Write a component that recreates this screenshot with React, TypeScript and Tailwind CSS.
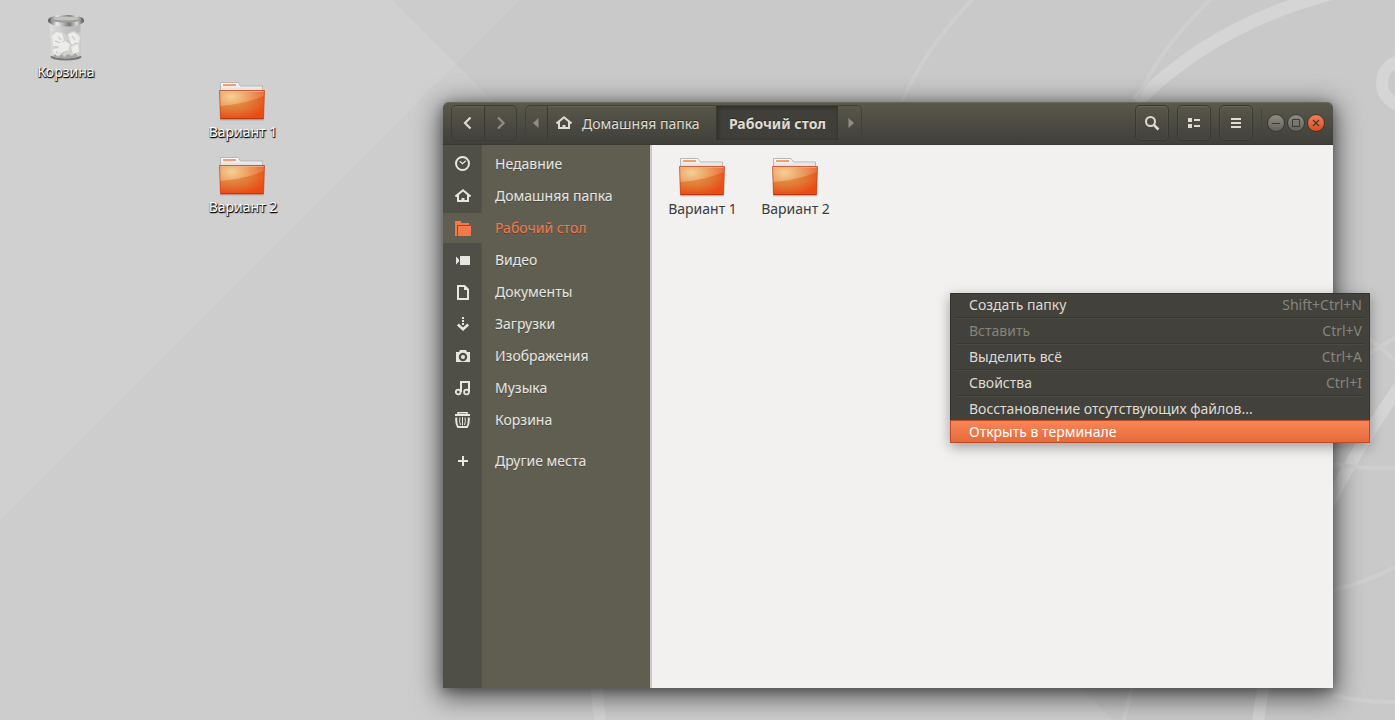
import React from "react";

type Icon = () => React.ReactElement;

function FolderArt() {
  return (
    <svg width="48" height="40" viewBox="1 1 48 40" aria-hidden="true">
      <defs>
        <radialGradient id="folderFace" cx="0.27" cy="0.22" r="0.95">
          <stop offset="0" stopColor="#f6cf96" />
          <stop offset="0.35" stopColor="#eda568" />
          <stop offset="0.75" stopColor="#ea7040" />
          <stop offset="1" stopColor="#e04a18" />
        </radialGradient>
        <radialGradient id="folderLow" cx="0.3" cy="0.2" r="0.8">
          <stop offset="0" stopColor="#e09a48" />
          <stop offset="0.55" stopColor="#e27632" />
          <stop offset="1" stopColor="#ea4c15" />
        </radialGradient>
        <linearGradient id="folderPaper" x1="0" y1="0" x2="0" y2="1">
          <stop offset="0" stopColor="#ffffff" />
          <stop offset="1" stopColor="#dedcda" />
        </linearGradient>
      </defs>
      <path d="M2.500 10V1.500h17.500l2.500 3.500H44.500v5z" fill="url(#folderPaper)" stroke="#b9b7b5" strokeWidth="1" />
      <rect x="5" y="3" width="13" height="2" fill="#f0a070" />
      <path d="M2 38.500h44v1H2z" fill="#000" opacity="0.15" />
      <path d="M1.500 9.500h45l-1 28.500h-43z" fill="url(#folderFace)" />
      <path d="M2 25C18 24 34 20 46 15L45.500 38h-43z" fill="url(#folderLow)" />
      <path d="M1.500 9.500h45l-1 28.500h-43z" fill="none" stroke="#c6431a" strokeOpacity="0.75" />
      <path d="M2.500 10.500h43" stroke="#f5b48a" strokeOpacity="0.7" />
      <path d="M3 37.500h42" stroke="#a8330c" strokeOpacity="0.7" />
    </svg>
  );
}

function TrashArt() {
  return (
    <svg width="48" height="50" viewBox="0 0 48 50" aria-hidden="true">
      <defs>
        <linearGradient id="trashRim" x1="0" x2="1">
          <stop offset="0" stopColor="#555" />
          <stop offset="0.25" stopColor="#eee" />
          <stop offset="0.6" stopColor="#777" />
          <stop offset="0.8" stopColor="#ddd" />
          <stop offset="1" stopColor="#555" />
        </linearGradient>
        <linearGradient id="trashGlass" x1="0" x2="1">
          <stop offset="0" stopColor="#dedede" />
          <stop offset="0.5" stopColor="#c4c4c4" />
          <stop offset="0.9" stopColor="#b8b8b8" />
          <stop offset="1" stopColor="#dcdcdc" />
        </linearGradient>
      </defs>
      <ellipse cx="24" cy="45" rx="15.500" ry="3.500" fill="#777" />
      <path d="M7.500 9l2 35q14.500 5 29 0l2-35z" fill="url(#trashGlass)" />
      <path d="M10 21l3-2 4 1 5 1 2 3 4-4 5-1 3 2 3-1-1.500 24q-13 4-26 0z" fill="#d0d1cd" />
      <path d="M10 24l4-4 6 1 2 7-5 6-6 0zM26 22l6-2 6 5-2 8-7-1zM16 33l7-4 5 3-2 8-8 1zM29 35l7-3 1 8-6 2zM11 37l6-1 1 7-6 1z" fill="#ececea" />
      <path d="M13 29l5 2M25 28l3 4M32 32l4-1M20 41l6-2M16 24l3 4M30 24l3 4M14 39l2 3" fill="none" stroke="#c0c2bc" />
      <path d="M11 44l2-2 3 3 4-3 2 3 4-3 4 2 3-3 3 3-4 2H14z" fill="#a6a9a2" />
      <ellipse cx="24" cy="9" rx="18" ry="5.500" fill="url(#trashRim)" />
      <ellipse cx="24" cy="7.500" rx="17.500" ry="4.500" fill="url(#trashRim)" />
      <ellipse cx="24" cy="7.500" rx="15" ry="3.200" fill="#9d9f9b" />
      <ellipse cx="24" cy="6.500" rx="13" ry="1.800" fill="#c1c4bf" />
    </svg>
  );
}

const glyph = "block size-4 shrink-0";

const ClockIcon: Icon = () => (
  <svg className={glyph} viewBox="0 0 16 16" fill="none" stroke="currentColor" aria-hidden="true">
    <circle cx="7.500" cy="7.500" r="6.500" strokeWidth="2" />
    <path d="M4.800 5.300L7.500 7.800l3.300-3" strokeWidth="1.200" />
  </svg>
);
const HomeIcon: Icon = () => (
  <svg className={glyph} viewBox="0 0 16 16" fill="none" stroke="currentColor" strokeWidth="2" aria-hidden="true">
    <path d="M.5 8.500L8 2.200l7.500 6.300" />
    <path d="M3 7v6h10V7" />
    <path d="M8 14v-4" strokeWidth="3" />
  </svg>
);
const FoldersIcon: Icon = () => (
  <svg className={glyph} viewBox="0 0 16 16" fill="currentColor" aria-hidden="true">
    <path d="M0 1h6v2h8v2H2v11H0z" />
    <path d="M3 6h13v10H3z" />
  </svg>
);
const VideoIcon: Icon = () => (
  <svg className={glyph} viewBox="0 0 16 16" fill="currentColor" aria-hidden="true">
    <path d="M1 4.500l3 3v2l-3 3zM5.500 4h9l.5.500v8l-.5.500h-9L5 12.500v-8z" />
  </svg>
);
const DocumentIcon: Icon = () => (
  <svg className={glyph} viewBox="0 0 16 16" aria-hidden="true">
    <path d="M3 2h6.500L13 5.500V15H3z" fill="none" stroke="currentColor" strokeWidth="2" />
    <path d="M9 1v5h5z" fill="currentColor" />
  </svg>
);
const DownloadIcon: Icon = () => (
  <svg className={glyph} viewBox="0 0 16 16" aria-hidden="true">
    <path d="M7 1h2v2H7zM7 4h2v2H7zM7 7h2v2H7z" fill="currentColor" />
    <path d="M2.800 8.500L8 13.200l5.200-4.700" fill="none" stroke="currentColor" strokeWidth="2.500" />
  </svg>
);
const CameraIcon: Icon = () => (
  <svg className={glyph} viewBox="0 0 16 16" fill="currentColor" aria-hidden="true">
    <path fillRule="evenodd" d="M5 2h6l1 2h3v10H1V4h3zM8 4.800a4.200 4.200 0 1 0 0 8.400 4.200 4.200 0 0 0 0-8.400z" />
    <circle cx="8" cy="9" r="2" />
  </svg>
);
const MusicIcon: Icon = () => (
  <svg className={glyph} viewBox="0 0 16 16" fill="none" stroke="currentColor" aria-hidden="true">
    <circle cx="3.200" cy="12" r="2.400" strokeWidth="1.800" />
    <circle cx="11.500" cy="12" r="2.400" strokeWidth="1.800" />
    <path d="M6 12V2h8v10" strokeWidth="2" />
  </svg>
);
const BinIcon: Icon = () => (
  <svg className={glyph} viewBox="0 0 16 16" fill="none" stroke="currentColor" aria-hidden="true">
    <path d="M0 3h15" strokeWidth="2" />
    <path d="M3 2V.800h9V2" strokeWidth="1.500" />
    <path d="M1.300 5.500q-.6 6 1.700 9.500h9q2.300-3.500 1.700-9.500" strokeWidth="2" />
    <path d="M5 5.500q-1 4 .5 7.500M7.500 5V13.500M10 5.500q1 4-.5 7.500" strokeWidth="1" />
  </svg>
);
const PlusIcon: Icon = () => (
  <svg className={glyph} viewBox="0 0 16 16" fill="none" stroke="currentColor" strokeWidth="2" aria-hidden="true">
    <path d="M3 8h10M8 3v10" />
  </svg>
);

const places: { label: string; icon: Icon; active?: boolean }[] = [
  { label: "Недавние", icon: ClockIcon },
  { label: "Домашняя папка", icon: HomeIcon },
  { label: "Рабочий стол", icon: FoldersIcon, active: true },
  { label: "Видео", icon: VideoIcon },
  { label: "Документы", icon: DocumentIcon },
  { label: "Загрузки", icon: DownloadIcon },
  { label: "Изображения", icon: CameraIcon },
  { label: "Музыка", icon: MusicIcon },
  { label: "Корзина", icon: BinIcon },
];

function Place({ label, icon: Glyph, active }: { label: string; icon: Icon; active?: boolean }) {
  return (
    <li>
      <button
        className={
          active
            ? "flex h-8 w-full items-center text-left text-[#f4794a]"
            : "flex h-8 w-full items-center text-left text-[#e6e6e3]"
        }
      >
        <span
          className={
            active
              ? "flex h-[30px] w-[39px] items-center justify-center bg-[#605e50]"
              : "flex h-[30px] w-[39px] items-center justify-center"
          }
        >
          <Glyph />
        </span>
        <span className="pb-[2px] pl-[13px] [text-shadow:0_1px_rgba(0,0,0,0.25)]">{label}</span>
      </button>
    </li>
  );
}

function DesktopItem({ label, children }: { label: string; children: React.ReactNode }) {
  return (
    <button className="flex w-24 flex-col items-center text-white [text-shadow:1px_1px_1px_#000,0_1px_1px_#000]">
      {children}
      <span className="leading-5">{label}</span>
    </button>
  );
}

const toolButton =
  "flex h-9 w-[34px] items-center justify-center rounded-[5px] border border-[#393832] text-[#dfdbd2] shadow-[inset_0_1px_rgba(255,255,255,0.07),inset_0_0_0_1px_rgba(255,255,255,0.03)]";

const menu: { label: string; keys?: string; disabled?: boolean }[] = [
  { label: "Создать папку", keys: "Shift+Ctrl+N" },
  { label: "Вставить", keys: "Ctrl+V", disabled: true },
  { label: "Выделить всё", keys: "Ctrl+A" },
  { label: "Свойства", keys: "Ctrl+I" },
];

function Wallpaper() {
  return (
    <svg
      className="absolute inset-0 h-full w-full"
      viewBox="0 0 1395 720"
      preserveAspectRatio="xMidYMid slice"
      fill="none"
      aria-hidden="true"
    >
      <path d="M0 0h1395v720H0z" fill="#cdcdcd" />
      <path d="M0 0H393L456 64L0 520z" fill="#d0d0d0" />
      <path d="M393 0h127l-64 64z" fill="#cccccc" />
      <path d="M520 0L456 64L1113 720H1395V0z" fill="#c9c9c9" />
      <g stroke="#d5d5d5">
        <path d="M1137 102Q1213 25 1330-6" strokeWidth="13" />
        <circle cx="1405" cy="83" r="23" strokeWidth="12" />
        <path d="M596 660q0 30 4 60M1258 720Q1280 560 1400 385" strokeWidth="12" />
      </g>
      <g stroke="#cfcfcf" strokeWidth="4">
        <path d="M902 102Q925 48 974-2M1138 98Q1160 48 1212-2" />
        <path d="M1333 464q30 5 62 4M1333 590q32-7 62-23M1333 695q30 8 62 7M1365 335l30 25M1365 356l30-18M1136 670l-12 50" />
      </g>
    </svg>
  );
}

export default function App() {
  return (
    <main className="relative min-h-screen overflow-hidden bg-[#cdcdcd] font-['Noto_Sans','Open_Sans',sans-serif] text-[14px]">
      <Wallpaper />

      <div className="absolute left-[18px] top-3">
        <DesktopItem label="Корзина">
          <TrashArt />
        </DesktopItem>
      </div>
      <div className="absolute left-[195px] top-[82px] flex flex-col gap-[15px]">
        <DesktopItem label="Вариант 1">
          <FolderArt />
        </DesktopItem>
        <DesktopItem label="Вариант 2">
          <FolderArt />
        </DesktopItem>
      </div>

      <section className="absolute bottom-8 left-[443px] right-[62px] top-[102px] flex flex-col rounded-t-[6px] shadow-[0_2px_8px_1px_rgba(0,0,0,0.2),0_6px_27px_3px_rgba(0,0,0,0.62)]">
        <header className="flex h-[43px] shrink-0 items-center rounded-t-[6px] border-b border-[#3a3933] bg-linear-to-b from-[#5b594c] to-[#403f3a] px-2 shadow-[inset_0_1px_#696758]">
          <div className="flex h-9 w-[66px] rounded-[5px] border border-[#3d3c36] text-[#dfdbd2]">
            <button aria-label="Назад" className="flex flex-1 items-center justify-center rounded-l-[5px] border-r border-[#393832] shadow-[inset_0_1px_rgba(255,255,255,0.07)]">
              <svg className="size-4" viewBox="0 0 16 16" fill="none" stroke="currentColor" strokeWidth="2.200" aria-hidden="true">
                <path d="M10.500 2.500L5 8l5.500 5.500" />
              </svg>
            </button>
            <button aria-label="Вперёд" disabled className="flex flex-1 items-center justify-center text-[#908d84]">
              <svg className="size-4" viewBox="0 0 16 16" fill="none" stroke="currentColor" strokeWidth="2.200" aria-hidden="true">
                <path d="M6 2.500L11.500 8 6 13.500" />
              </svg>
            </button>
          </div>

          <nav aria-label="Путь" className="ml-2 flex h-9 overflow-hidden rounded-[5px] border border-[#42413a] text-[#dfdbd2]">
            <button aria-label="Показать предыдущие" className="flex w-[21px] items-center justify-center pr-[2px] text-[#918e84]">
              <svg width="6" height="10" viewBox="0 0 6 10" fill="currentColor" aria-hidden="true">
                <path d="M5.500 0v10L0 5z" />
              </svg>
            </button>
            <button className="flex w-[170px] items-center gap-[10px] border-x border-[#393832] pl-2 shadow-[inset_0_1px_rgba(255,255,255,0.07)] [text-shadow:0_-1px_rgba(0,0,0,0.4)]">
              <HomeIcon />
              Домашняя папка
            </button>
            <button className="w-[121px] bg-[#403f39] font-bold shadow-[inset_1px_1px_4px_rgba(0,0,0,0.35)] [text-shadow:0_-1px_rgba(0,0,0,0.4)]">
              Рабочий стол
            </button>
            <button aria-label="Показать следующие" className="flex w-[23px] items-center justify-center pl-[2px] text-[#918e84]">
              <svg width="6" height="10" viewBox="0 0 6 10" fill="currentColor" aria-hidden="true">
                <path d="M.5 0v10L6 5z" />
              </svg>
            </button>
          </nav>

          <div className="ml-auto flex gap-2">
            <button aria-label="Поиск" className={toolButton}>
              <svg className="size-4" viewBox="0 0 16 16" fill="none" stroke="currentColor" aria-hidden="true">
                <circle cx="6.500" cy="6.500" r="4.500" strokeWidth="2" />
                <path d="M9.800 9.800l4.700 4.700" strokeWidth="2.600" />
              </svg>
            </button>
            <button aria-label="Вид" className={toolButton}>
              <svg className="size-4" viewBox="0 0 16 16" fill="currentColor" aria-hidden="true">
                <path d="M2 3h4v4H2zM2 9h4v4H2zM8 4h6v2H8zM8 10h6v2H8z" />
              </svg>
            </button>
            <button aria-label="Меню" className={toolButton}>
              <svg className="size-4" viewBox="0 0 16 16" fill="currentColor" aria-hidden="true">
                <path d="M3 3h10v2H3zM3 7h10v2H3zM3 11h10v2H3z" />
              </svg>
            </button>
          </div>
          <div className="ml-2 mr-[5px] h-7 w-px bg-[#45443e]" />
          <div className="flex gap-[2px] text-[#3b3a35]">
            <button aria-label="Свернуть" className="flex size-[18px] items-center justify-center rounded-full border border-[#393832] bg-linear-to-b from-[#8e8c85] to-[#64635c]">
              <svg width="8" height="8" viewBox="0 0 8 8" stroke="currentColor" aria-hidden="true">
                <path d="M0 4.500h8" />
              </svg>
            </button>
            <button aria-label="Развернуть" className="flex size-[18px] items-center justify-center rounded-full border border-[#393832] bg-linear-to-b from-[#8e8c85] to-[#64635c]">
              <svg width="8" height="8" viewBox="0 0 8 8" fill="none" stroke="currentColor" aria-hidden="true">
                <path d="M.5.500h7v7h-7z" />
              </svg>
            </button>
            <button aria-label="Закрыть" className="flex size-[18px] items-center justify-center rounded-full border border-[#393832] bg-linear-to-b from-[#f47d54] to-[#dd4c1c]">
              <svg width="8" height="8" viewBox="0 0 8 8" stroke="currentColor" strokeWidth="1.300" aria-hidden="true">
                <path d="M1 1l6 6M7 1L1 7" />
              </svg>
            </button>
          </div>
        </header>

        <div className="flex flex-1">
          <aside className="w-[207px] shrink-0 bg-linear-to-r from-[#504f47] from-[38px] via-[#46453e] via-[38px] to-[#605e50] to-[39px] pt-[3px]">
            <ul>
              {places.map((p) => (
                <Place key={p.label} {...p} />
              ))}
            </ul>
            <ul className="mt-[9px]">
              <Place label="Другие места" icon={PlusIcon} />
            </ul>
          </aside>
          <div className="flex flex-1 items-start border-l-2 border-[#cbc9c7] bg-[#f2f1f0] pl-1 pt-[13px] text-[#3c3c3c]">
            <button className="flex w-[93px] flex-col items-center">
              <FolderArt />
              <span className="leading-[22px]">Вариант 1</span>
            </button>
            <button className="flex w-[93px] flex-col items-center">
              <FolderArt />
              <span className="leading-[22px]">Вариант 2</span>
            </button>
          </div>
        </div>
      </section>

      <div role="menu" className="absolute right-[25px] top-[293px] w-[420px] bg-[#42413b] text-[#dfdbd2] shadow-[0_4px_12px_rgba(0,0,0,0.35),inset_0_0_0_1px_#34332e]">
        {menu.map((m) => (
          <button
            key={m.label}
            role="menuitem"
            disabled={m.disabled}
            className="flex h-[26px] w-full flex-col px-[6px] disabled:text-[#878479]"
          >
            <span className="flex h-6 w-full items-center justify-between pb-[2px] pl-[13px] pr-[2px]">
              <span>{m.label}</span>
              <span className="text-[#87857c]">{m.keys}</span>
            </span>
            <span className="h-[2px] w-full border-t border-[#383731] bg-[#4a4942]" />
          </button>
        ))}
        <button role="menuitem" className="block h-[23px] w-full pl-[19px] text-left">
          Восстановление отсутствующих файлов...
        </button>
        <button role="menuitem" className="block h-[23px] w-full border border-[#b84e27] bg-linear-to-b from-[#f98557] to-[#e66a39] pl-[18px] text-left leading-[22px] text-white">
          Открыть в терминале
        </button>
      </div>
    </main>
  );
}
